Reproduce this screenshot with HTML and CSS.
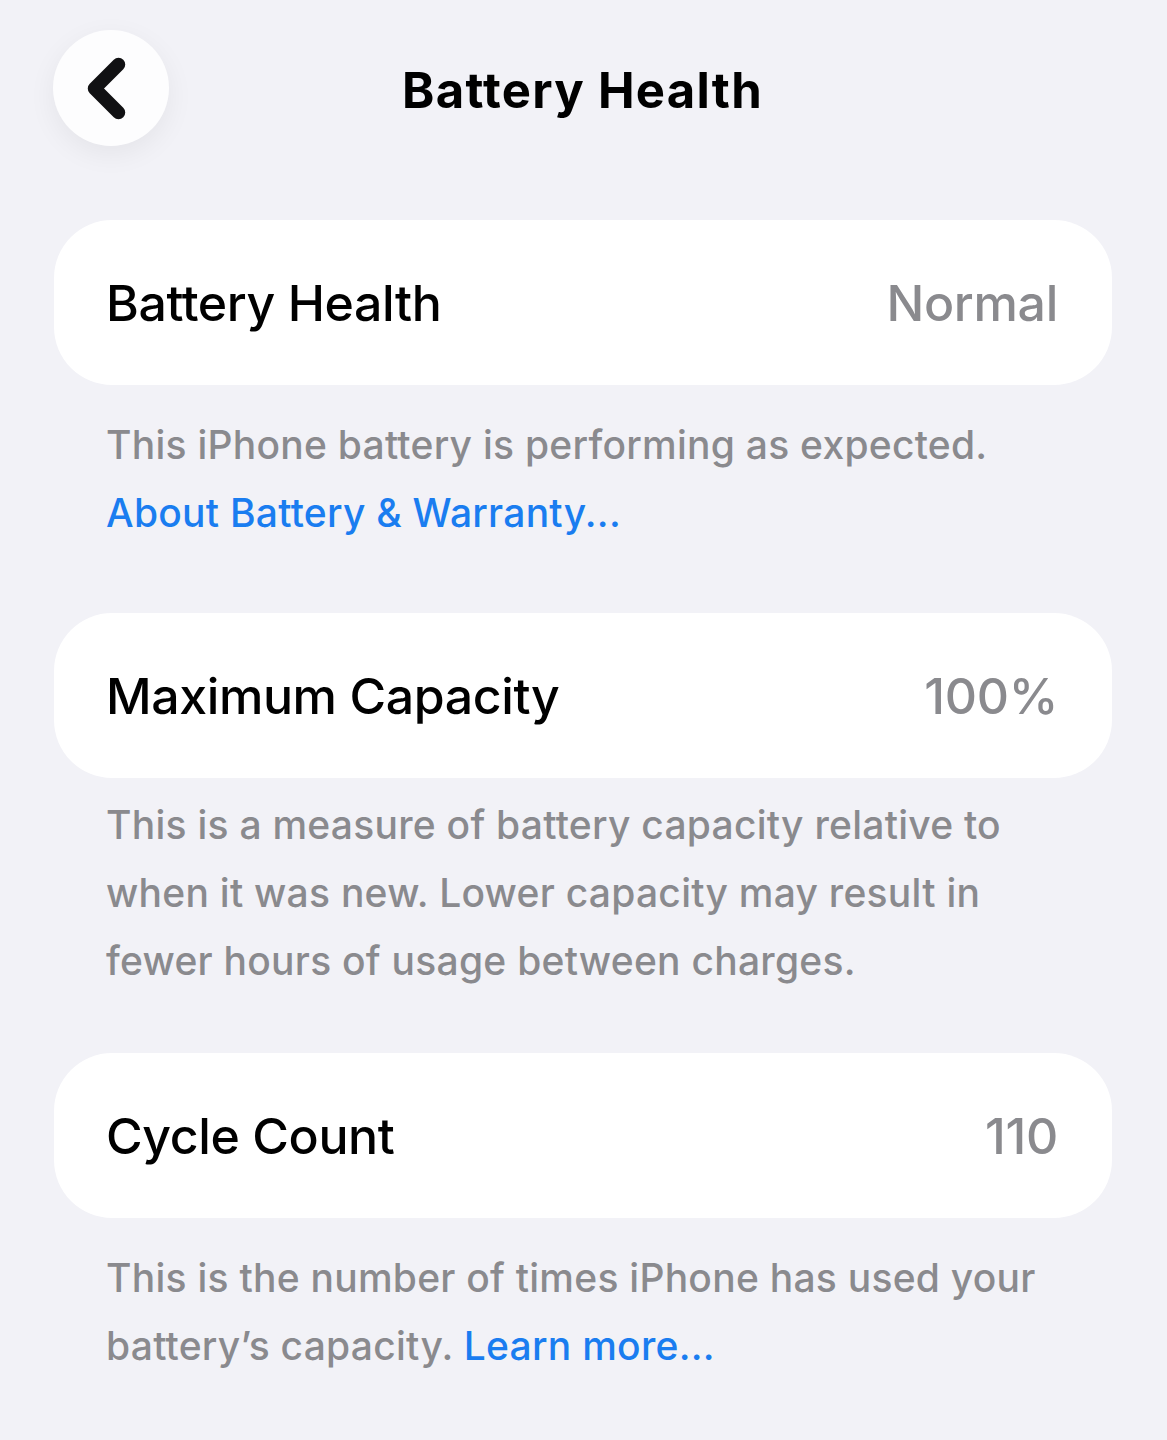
FILE: index.html
```html
<!DOCTYPE html>
<html lang="en">
<head>
<meta charset="utf-8">
<title>Battery Health</title>
<link rel="stylesheet" href="styles.css">
</head>
<body>
<div class="screen">
  <header class="nav">
    <button class="back" type="button" aria-label="Back">
      <svg viewBox="0 0 116 116" width="116" height="116">
        <path d="M65.5 34.5 L41.5 58.5 L65.5 82.5" fill="none" stroke="#111113" stroke-width="13.5" stroke-linecap="round" stroke-linejoin="round"/>
      </svg>
    </button>
    <h1 class="nav-title">Battery Health</h1>
    <span class="nav-spacer"></span>
  </header>

  <section class="group group-first">
    <div class="row">
      <span class="row-label">Battery Health</span>
      <span class="row-value">Normal</span>
    </div>
    <p class="footer footer-loose"><span>This iPhone battery is performing as expected.</span><br><a class="link" href="#">About Battery &amp; Warranty...</a></p>
  </section>

  <section class="group group-second">
    <div class="row">
      <span class="row-label">Maximum Capacity</span>
      <span class="row-value">100%</span>
    </div>
    <p class="footer footer-tight">This is a measure of battery capacity relative to when it was new. Lower capacity may result in fewer hours of usage between charges.</p>
  </section>

  <section class="group group-third">
    <div class="row">
      <span class="row-label">Cycle Count</span>
      <span class="row-value">110</span>
    </div>
    <p class="footer footer-loose"><span>This is the number of times iPhone has used your</span> <span>battery’s capacity.</span> <a class="link" href="#">Learn more...</a></p>
  </section>
</div>
</body>
</html>
```

FILE: styles.css
```css
* {
  box-sizing: border-box;
}

html, body {
  margin: 0;
  padding: 0;
  background: #f2f2f7;
}

body {
  font-family: Inter, "Noto Sans", "Liberation Sans", sans-serif;
  color: #000;
  -webkit-font-smoothing: antialiased;
}

.screen {
  width: 1167px;
  min-height: 1440px;
  padding: 30px 55px 0 54px;
}

/* navigation bar */
.nav {
  display: grid;
  grid-template-columns: 116px 1fr 116px;
  align-items: center;
  height: 116px;
  margin-left: -1px;
}

.back {
  width: 116px;
  height: 116px;
  padding: 0;
  border: none;
  border-radius: 50%;
  background: #fdfdfe;
  box-shadow: 0 8px 28px rgba(0, 0, 0, 0.06);
  display: flex;
  align-items: center;
  justify-content: center;
}

.back svg {
  display: block;
}

.nav-title {
  margin: 0;
  text-align: center;
  font-size: 49px;
  font-weight: 700;
  letter-spacing: 1.3px;
  padding-top: 4px;
}

/* grouped rows */
.group-first {
  margin-top: 74px;
}

.group-second {
  margin-top: 66px;
}

.group-third {
  margin-top: 58px;
}

.row {
  display: flex;
  align-items: center;
  justify-content: space-between;
  height: 165px;
  padding: 0 54px 0 52px;
  background: #ffffff;
  border-radius: 58px;
}

.row-label {
  font-size: 50px;
  font-weight: 500;
  letter-spacing: -0.4px;
}

.row-value {
  font-size: 50px;
  font-weight: 500;
  color: #8a8a8e;
  letter-spacing: -0.3px;
}

.footer {
  margin: 0;
  padding: 0 52px 0 52px;
  font-size: 39px;
  line-height: 68px;
  font-weight: 500;
  letter-spacing: 0.25px;
  color: #8a8a8e;
}

.footer-loose {
  padding-top: 26px;
}

.footer-tight {
  padding-top: 13px;
}

.link {
  color: #1a7df0;
  text-decoration: none;
}
```
